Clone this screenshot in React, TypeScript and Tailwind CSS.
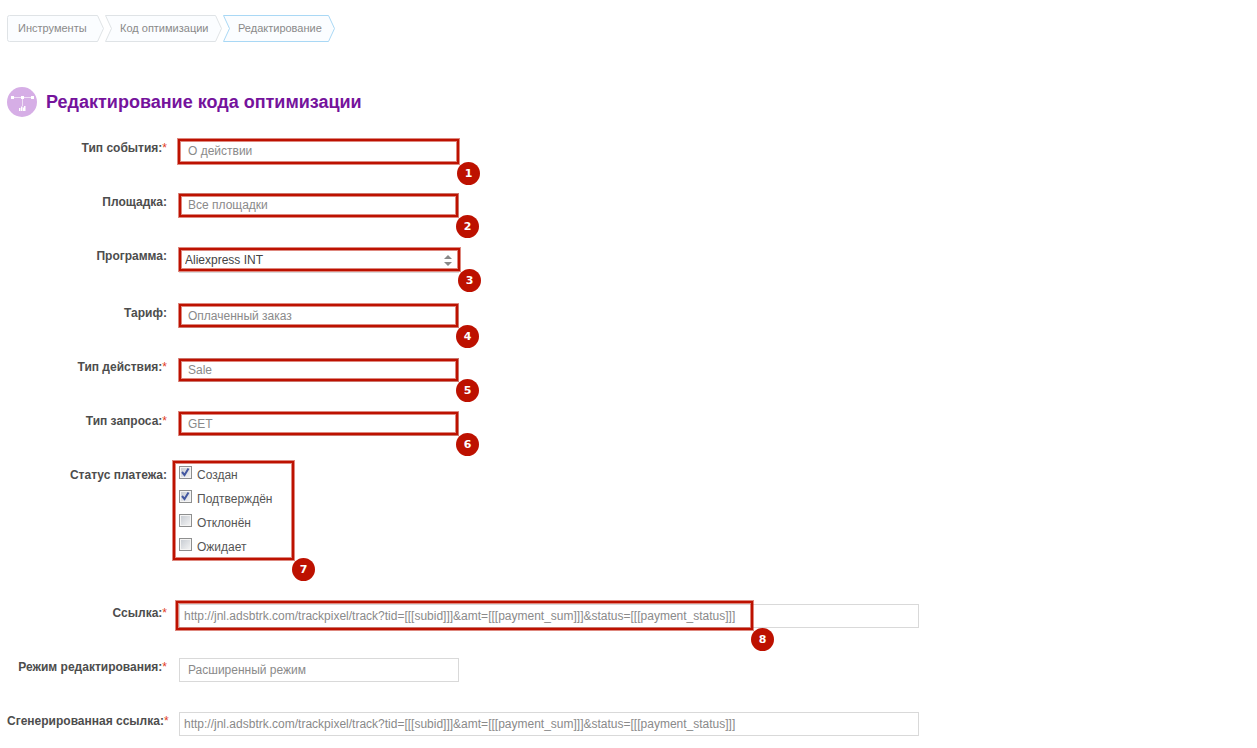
import { useState } from "react";
import type { ReactNode } from "react";

const TRACK_URL =
  "http://jnl.adsbtrk.com/trackpixel/track?tid=[[[subid]]]&amt=[[[payment_sum]]]&status=[[[payment_status]]]";

const STATUSES = [
  { id: "created", label: "Создан", checked: true },
  { id: "approved", label: "Подтверждён", checked: true },
  { id: "declined", label: "Отклонён", checked: false },
  { id: "pending", label: "Ожидает", checked: false },
];

const CRUMBS = [
  { label: "Инструменты", width: 97, className: "w-[97px] pl-[11px]" },
  { label: "Код оптимизации", width: 117, className: "w-[117px] pl-[15px]" },
  { label: "Редактирование", width: 112, className: "w-[112px] pl-[15px]" },
];

interface CrumbProps {
  label: string;
  width: number;
  className: string;
  first: boolean;
  active: boolean;
}

function Crumb({ label, width, className, first, active }: CrumbProps) {
  const start = first ? "M2.5 .5" : "M.5 .5";
  const tail = first ? "H2.5Q.5 26.5 .5 24.5V2.5Q.5 .5 2.5 .5Z" : "H.5L6.5 13.5Z";
  return (
    <a
      href="#"
      aria-current={active ? "page" : undefined}
      className={`relative flex h-[27px] items-center whitespace-nowrap ${className}`}
    >
      <svg className="absolute inset-0 h-full w-full" viewBox={`0 0 ${width} 27`} aria-hidden="true">
        <path
          d={`${start}H${width - 6.5}L${width - 0.5} 13.5L${width - 6.5} 26.5${tail}`}
          fill="#fbfdff"
          stroke={active ? "#a9d8f5" : "#dfe3e6"}
        />
      </svg>
      <span className="relative">{label}</span>
    </a>
  );
}

// numbered red frame laid over a control
function Mark({ n, className }: { n: number; className: string }) {
  return (
    <div
      className={`pointer-events-none absolute border-2 border-[#bd1100] shadow-[0_0_0_1px_#bd110080,inset_0_0_0_1px_#bd110080] ${className}`}
    >
      <span className="absolute top-full left-full flex size-[23px] items-center justify-center rounded-full bg-[#bd1100] pt-px font-['DejaVu_Sans',sans-serif] text-[11px] leading-4 font-bold text-white">
        {n}
      </span>
    </div>
  );
}

interface RowProps {
  id: string;
  label: string;
  required?: boolean;
  group?: boolean;
  children: ReactNode;
}

function Row({ id, label, required, group, children }: RowProps) {
  const text = (
    <>
      {label}:{required && <span className="font-normal text-[#e23c1c]">*</span>}
    </>
  );
  const cls = "w-40 shrink-0 whitespace-nowrap text-right leading-[18px] font-bold text-[#4d4d4d]";
  return (
    <div className="flex items-start gap-3">
      {group ? (
        <span id={id} className={cls}>{text}</span>
      ) : (
        <label htmlFor={id} className={cls}>{text}</label>
      )}
      {children}
    </div>
  );
}

function TextField({ id, value, wide, mark }: { id: string; value: string; wide?: boolean; mark?: ReactNode }) {
  return (
    <div className={`relative ${wide ? "w-full max-w-[740px]" : "w-[280px]"}`}>
      <input
        id={id}
        type="text"
        defaultValue={value}
        className={`block h-6 w-full border border-[#d9d9d9] bg-white text-[#8a8a8a] outline-none ${wide ? "px-1" : "px-2"}`}
      />
      {mark}
    </div>
  );
}

export default function App() {
  const [statuses, setStatuses] = useState(STATUSES);

  function toggle(id: string) {
    setStatuses((list) => list.map((s) => (s.id === id ? { ...s, checked: !s.checked } : s)));
  }

  return (
    <main className="px-[7px] pt-[15px] font-['Liberation_Sans',Arial,sans-serif] text-[12px]">
      <nav className="flex gap-px text-[11px] text-[#8a8a8a]">
        {CRUMBS.map((c, i) => (
          <Crumb key={c.label} {...c} first={i === 0} active={i === CRUMBS.length - 1} />
        ))}
      </nav>

      <header className="mt-[45px] flex items-center gap-[9px]">
        <svg className="size-[30px]" viewBox="0 0 30 30" aria-hidden="true">
          <circle cx="15" cy="15" r="15" fill="#d6aee6" />
          <path d="M5 10.5H25M15.5 11V19" stroke="#fff" strokeOpacity=".6" fill="none" />
          <path d="M4 9h3v3H4zM14 9h3v3h-3zM24 9h3v3h-3z" fill="#fff" />
          <path d="M12 21h1.500v3H12zM14 19.500h1.500V24H14zM16 20.500h1V24h-1zM17 19h1.500v5H17z" fill="#fff" />
        </svg>
        <h1 className="text-[18px] leading-6 font-bold text-[#75139c]">Редактирование кода оптимизации</h1>
      </header>

      <form className="mt-[22px] flex flex-col gap-[30px]" onSubmit={(e) => e.preventDefault()}>
        <Row id="event" label="Тип события" required>
          <TextField
            id="event"
            value="О действии"
            mark={<Mark n={1} className="top-0 right-0 -bottom-px -left-px" />}
          />
        </Row>
        <Row id="site" label="Площадка">
          <TextField
            id="site"
            value="Все площадки"
            mark={<Mark n={2} className="top-px right-px bottom-0 left-0" />}
          />
        </Row>
        <Row id="program" label="Программа">
          <div className="relative h-[27px] w-[280px]">
            <select
              id="program"
              className="block h-[26px] w-full appearance-none border-b border-[#d9d9d9] bg-white px-[6px] text-[#444] outline-none"
            >
              <option>Aliexpress INT</option>
            </select>
            <svg
              className="pointer-events-none absolute top-2 right-[7px] h-[11px] w-2"
              viewBox="0 0 8 11"
              aria-hidden="true"
            >
              <path d="M4 0L8 4H0zM4 11L0 7H8z" fill="#888" />
            </svg>
            <Mark n={3} className="top-px -right-px bottom-[3px] left-0" />
          </div>
        </Row>
        <Row id="tariff" label="Тариф">
          <TextField
            id="tariff"
            value="Оплаченный заказ"
            mark={<Mark n={4} className="top-0 right-px bottom-px left-0" />}
          />
        </Row>
        <Row id="action" label="Тип действия" required>
          <TextField
            id="action"
            value="Sale"
            mark={<Mark n={5} className="top-px right-px bottom-px left-0" />}
          />
        </Row>
        <Row id="request" label="Тип запроса" required>
          <TextField
            id="request"
            value="GET"
            mark={<Mark n={6} className="top-0 right-px bottom-px left-0" />}
          />
        </Row>
        <Row id="status" label="Статус платежа" group>
          <div role="group" aria-labelledby="status" className="relative mb-3 text-[#555]">
            {statuses.map((s) => (
              <label key={s.id} className="flex h-6 items-start gap-[5px] leading-[18px]">
                <span className="relative block size-[13px]">
                  <input
                    type="checkbox"
                    checked={s.checked}
                    onChange={() => toggle(s.id)}
                    className="block size-[13px] appearance-none border border-[#8e8f8f] bg-linear-to-br from-[#c4c9d0] to-[#f6f6f6] shadow-[inset_0_0_0_1px_#f4f4f4]"
                  />
                  {s.checked && (
                    <svg
                      className="pointer-events-none absolute inset-0 size-[13px]"
                      viewBox="0 0 13 13"
                      aria-hidden="true"
                    >
                      <path d="M3 6L5.500 9L9.500 2.500" fill="none" stroke="#4257a0" strokeWidth="2" />
                    </svg>
                  )}
                </span>
                {s.label}
              </label>
            ))}
            <Mark n={7} className="-top-[5px] -left-[6px] h-[99px] w-[121px]" />
          </div>
        </Row>
        <Row id="link" label="Ссылка" required>
          <TextField
            id="link"
            value={TRACK_URL}
            wide
            mark={<Mark n={8} className="-top-[3px] -left-[3px] h-[29px] w-[577px]" />}
          />
        </Row>
        <Row id="mode" label="Режим редактирования" required>
          <TextField id="mode" value="Расширенный режим" />
        </Row>
        <Row id="generated" label="Сгенерированная ссылка" required>
          <TextField id="generated" value={TRACK_URL} wide />
        </Row>
      </form>
    </main>
  );
}
